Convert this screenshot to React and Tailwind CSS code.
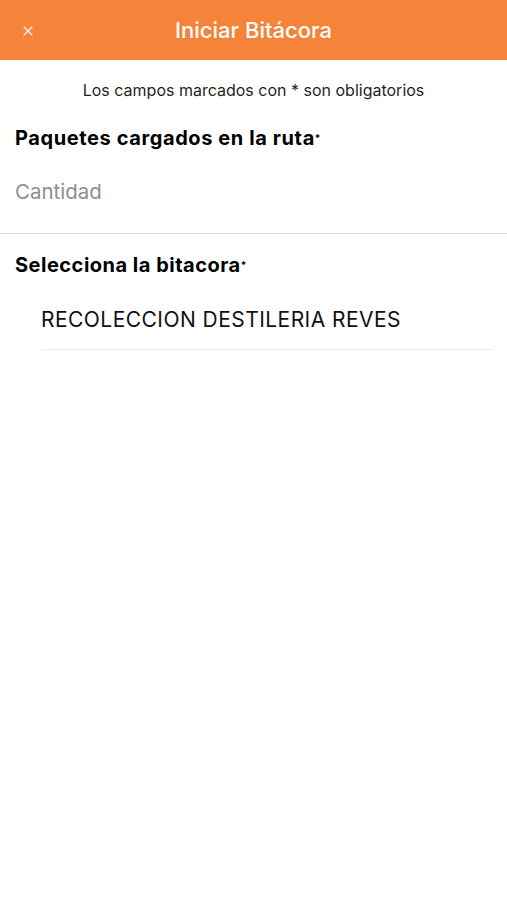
import { X } from 'lucide-react';

export default function App() {
    return (
        <div className="min-h-screen bg-white font-['Inter',sans-serif]">
            {/* Header */}
            <div className="h-[60px] bg-[#f5843a] flex items-center relative">
                <button className="absolute left-[20px] top-[23px] text-white">
                    <X size={16} strokeWidth={1.7} />
                </button>
                <h1 className="w-full text-center text-white text-[22px] font-medium">Iniciar Bitácora</h1>
            </div>

            <p className="text-center text-[16px] text-[#1f1f1f] mt-[20px] leading-[20px]">
                Los campos marcados con * son obligatorios
            </p>

            {/* Paquetes */}
            <div className="border-b border-[#dcdcdc]">
                <h2 className="px-[15px] mt-[26px] text-[20px] font-bold tracking-[0.6px] text-black leading-[24px]">
                    Paquetes cargados en la ruta<span className="text-[10px] align-top">*</span>
                </h2>
                <input
                    placeholder="Cantidad"
                    className="block w-full px-[15px] mt-[29px] mb-[28px] text-[20.5px] leading-[26px] placeholder:text-[#8e8e8e] outline-none"
                />
            </div>

            {/* Bitacora */}
            <h2 className="px-[15px] mt-[19px] text-[20px] font-bold tracking-[0.5px] text-black leading-[24px]">
                Selecciona la bitacora<span className="text-[10px] align-top">*</span>
            </h2>
            <div className="ml-[41px] mr-[14px] mt-[30px] border-b border-[#ececec] pb-[16px]">
                <p className="text-[21px] tracking-[0.45px] leading-[26px] text-[#111]">RECOLECCION DESTILERIA REVES</p>
            </div>
        </div>
    );
}
